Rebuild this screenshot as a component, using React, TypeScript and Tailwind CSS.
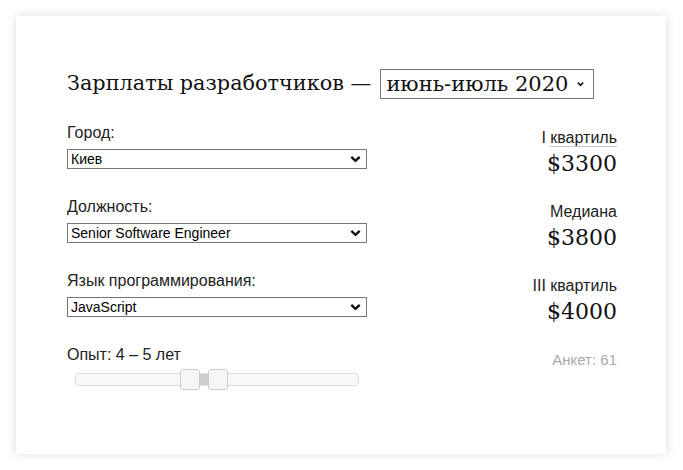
import React from "react";

const sans = { fontFamily: '"Liberation Sans", Arial, sans-serif' };
const serif = { fontFamily: '"DejaVu Serif", Georgia, serif' };

function Chevron({ small }: { small?: boolean }) {
  if (small) {
    return (
      <svg width="7" height="5" viewBox="0 0 7 5" className="pointer-events-none absolute right-[10px] top-1/2 -translate-y-1/2">
        <path d="M0.8 1 L3.5 3.8 L6.2 1" fill="none" stroke="#111" strokeWidth="1.7" />
      </svg>
    );
  }
  return (
    <svg width="11" height="7" viewBox="0 0 11 7" className="pointer-events-none absolute right-[6px] top-1/2 -translate-y-1/2">
      <path d="M1.3 1.3 L5.5 5.3 L9.7 1.3" fill="none" stroke="#111" strokeWidth="2.4" />
    </svg>
  );
}

function Field({ label, value }: { label: string; value: string }) {
  return (
    <div className="flex flex-col">
      <div className="text-[16px] leading-[18px] text-[#222]" style={sans}>{label}</div>
      <div className="relative mt-[7px] w-[300px]">
        <select
          defaultValue={value}
          className="block h-[20px] w-full appearance-none border border-[#767676] bg-white pl-[3px] text-[14px] leading-[18px] text-black outline-none"
          style={sans}
        >
          <option>{value}</option>
        </select>
        <Chevron />
      </div>
    </div>
  );
}

function Stat({ label, value, underline }: { label: string; value: string; underline?: boolean }) {
  return (
    <div className="flex flex-col items-end pt-[5px]">
      <div className="text-[16px] leading-[18px] text-[#222]" style={sans}>
        {underline ? (
          <>
            I <span className="border-b border-[#c8c8c8]">квартиль</span>
          </>
        ) : (
          label
        )}
      </div>
      <div className="mt-[3px] text-[22px] leading-[28px] text-[#111]" style={serif}>{value}</div>
    </div>
  );
}

export default function App() {
  return (
    <div className="min-h-[470px] bg-white pl-[16px] pt-[16px]">
      <div className="h-[438px] w-[650px] bg-white pl-[51px] pr-[49px] pt-[53px] shadow-[0_0_10px_rgba(0,0,0,0.14)]">
        {/* Title */}
        <div className="flex h-[30px] items-center text-[20.8px] text-[#111]" style={serif}>
          <span>Зарплаты разработчиков —</span>
          <div className="relative ml-[9px] w-[214px]">
            <select
              defaultValue="июнь-июль 2020"
              className="block h-[30px] w-full appearance-none border border-[#767676] bg-white pl-[5px] text-[21px] leading-[28px] text-[#111] outline-none"
              style={serif}
            >
              <option>июнь-июль 2020</option>
            </select>
            <Chevron small />
          </div>
        </div>

        <div className="mt-[25px] flex flex-col">
          <div className="flex h-[74px] items-start justify-between">
            <Field label="Город:" value="Киев" />
            <Stat label="I квартиль" value="$3300" underline />
          </div>
          <div className="flex h-[74px] items-start justify-between">
            <Field label="Должность:" value="Senior Software Engineer" />
            <Stat label="Медиана" value="$3800" />
          </div>
          <div className="flex h-[74px] items-start justify-between">
            <Field label="Язык программирования:" value="JavaScript" />
            <Stat label="III квартиль" value="$4000" />
          </div>
          <div className="flex items-start justify-between">
            <div className="flex flex-col">
              <div className="text-[16px] leading-[18px] text-[#222]" style={sans}>Опыт: 4 – 5 лет</div>
              <div className="relative ml-[8px] mt-[9px] h-[13px] w-[284px] rounded-[4px] border border-[#dddddd] bg-[#f8f8f8]">
                <div className="absolute left-[124px] top-0 h-full w-[9px] bg-[#cfcfcf]" />
                <div className="absolute left-[104px] top-[-5px] h-[21px] w-[20px] rounded-[3px] border border-[#cccccc] bg-[#f6f6f6]" />
                <div className="absolute left-[132px] top-[-5px] h-[21px] w-[20px] rounded-[3px] border border-[#cccccc] bg-[#f6f6f6]" />
              </div>
            </div>
            <div className="pt-[5px] text-[15px] leading-[17px] text-[#aaaaaa]" style={sans}>Анкет: 61</div>
          </div>
        </div>
      </div>
    </div>
  );
}
